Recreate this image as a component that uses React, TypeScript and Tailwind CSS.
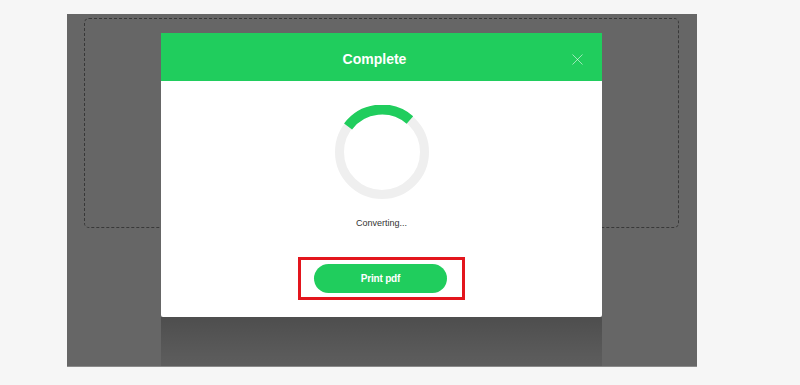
export default function App() {
  return (
    <div className="h-[385px] w-[800px] bg-[#f6f6f6] pt-[14px] pl-[67px] font-['Liberation_Sans',Arial,sans-serif]">
      <div className="relative h-[353px] w-[630px] overflow-hidden border-b border-[#8a8a8a] bg-[#666666]">
        {/* drop zone */}
        <div className="mt-[4px] ml-[17px] h-[210px] w-[595px] rounded-[5px] border-[1.5px] border-dashed border-[#383838]" />

        {/* modal shadow */}
        <div className="absolute top-[303px] left-[94px] h-[60px] w-[441px] bg-gradient-to-b from-[rgba(0,0,0,0.24)] via-[rgba(0,0,0,0.14)] to-[rgba(0,0,0,0.05)]" />

        {/* modal */}
        <div className="absolute top-[19px] left-[94px] flex h-[284px] w-[441px] flex-col items-center overflow-hidden rounded-b-[2px] bg-white">
          <div className="relative flex h-[48px] w-full items-center justify-center bg-[#20cd5d] pt-[5px] pr-[14px]">
            <span className="text-[14px] font-bold text-white">Complete</span>
            <svg
              className="absolute top-[21px] right-[19px]"
              width="11"
              height="11"
              viewBox="0 0 11 11"
              fill="none"
              stroke="rgba(255,255,255,0.55)"
              strokeWidth="1"
            >
              <path d="M0.5 0.5L10.5 10.5M10.5 0.5L0.5 10.5" />
            </svg>
          </div>

          <svg className="mt-[24px]" width="94" height="94" viewBox="0 0 94 94" fill="none">
            <circle cx="47" cy="47" r="42.5" stroke="#efefef" strokeWidth="9" />
            <path d="M13.06 21.42A42.5 42.5 0 0 1 74.88 14.93" stroke="#20cd5d" strokeWidth="10" />
          </svg>

          <p className="mt-[19px] text-[9px] leading-[11px] text-[#333333]">Converting...</p>

          <div className="mt-[28px] border-[3px] border-[#e3151d] py-[4px] pr-[15px] pl-[13px]">
            <button className="flex h-[29px] w-[133px] items-center justify-center rounded-full bg-[#20cd5d] text-[10px] font-bold tracking-[-0.2px] text-white">
              Print pdf
            </button>
          </div>
        </div>
      </div>
    </div>
  );
}
